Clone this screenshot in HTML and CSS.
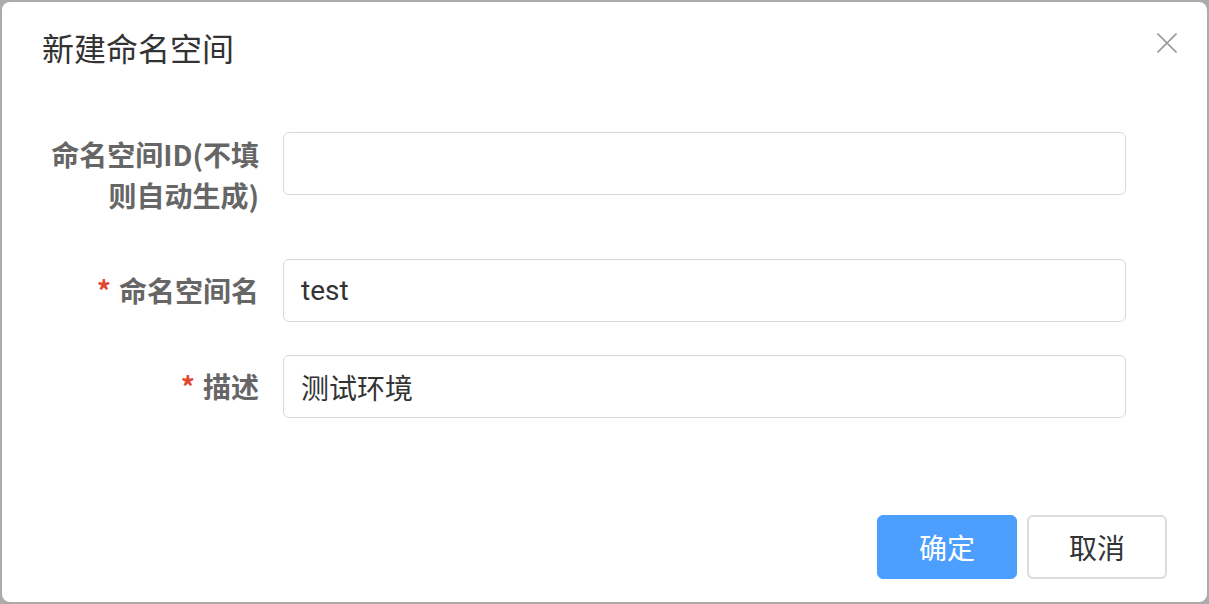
FILE: index.html
```html
<!DOCTYPE html>
<html lang="zh-CN">
<head>
<meta charset="utf-8">
<title>新建命名空间</title>
<link rel="stylesheet" href="styles.css">
</head>
<body>
<div class="dialog">
  <div class="dialog-header">
    <span class="dialog-title">新建命名空间</span>
    <button class="dialog-close" aria-label="关闭">
      <svg width="20" height="20" viewBox="0 0 20 20"><path d="M0.5 0.5 L19.5 19.5 M19.5 0.5 L0.5 19.5" stroke="#9a9a9a" stroke-width="1.6" fill="none"/></svg>
    </button>
  </div>
  <form class="dialog-body">
    <div class="form-row">
      <label class="form-label form-label-multi">命名空间ID(不填则自动生成)</label>
      <input class="form-input" type="text" value="">
    </div>
    <div class="form-row">
      <label class="form-label"><span class="required">*</span>命名空间名</label>
      <input class="form-input" type="text" value="test">
    </div>
    <div class="form-row">
      <label class="form-label"><span class="required">*</span>描述</label>
      <input class="form-input" type="text" value="测试环境">
    </div>
  </form>
  <div class="dialog-footer">
    <button class="btn btn-primary" type="button">确定</button>
    <button class="btn btn-default" type="button">取消</button>
  </div>
</div>
</body>
</html>
```

FILE: styles.css
```css
* { box-sizing: border-box; }
html, body { margin: 0; padding: 0; }
body {
  width: 1209px;
  height: 604px;
  background: #ababab;
  font-family: "Noto Sans CJK SC", "Noto Sans", sans-serif;
  overflow: hidden;
}
.dialog {
  margin: 2px;
  width: 1205px;
  height: 600px;
  background: #ffffff;
  border-radius: 8px;
  display: flex;
  flex-direction: column;
}
.dialog-header {
  display: flex;
  justify-content: space-between;
  align-items: flex-start;
  padding: 25px 30px 0 40px;
}
.dialog-title {
  font-size: 32px;
  line-height: 40px;
  color: #333333;
}
.dialog-close {
  margin-top: 6px;
  width: 20px;
  height: 20px;
  padding: 0;
  border: 0;
  background: none;
  display: flex;
}
.dialog-body {
  margin: 0;
  padding: 65px 81px 0 42px;
}
.form-row {
  display: flex;
  align-items: flex-start;
  margin-bottom: 33px;
}
.form-label {
  width: 239px;
  flex: none;
  padding-right: 24px;
  text-align: right;
  font-size: 28px;
  font-weight: 700;
  color: #666666;
  line-height: 63px;
}
.form-label-multi {
  line-height: 41px;
  padding-top: 2px;
  padding-bottom: 10px;
}
.required {
  color: #e0472f;
  margin-right: 8px;
}
.form-input {
  flex: 1;
  height: 63px;
  border: 1px solid #d9d9d9;
  border-radius: 6px;
  padding: 0 17px;
  font-family: "Roboto", "Noto Sans CJK SC", sans-serif;
  font-size: 28px;
  color: #333333;
  outline: none;
  background: #fff;
}
.dialog-footer {
  margin-top: auto;
  display: flex;
  justify-content: flex-end;
  gap: 10px;
  padding: 0 40px 23px 0;
}
.btn {
  width: 140px;
  height: 64px;
  border-radius: 6px;
  font-family: "Noto Sans CJK SC", sans-serif;
  font-size: 28px;
  padding: 0;
  cursor: pointer;
}
.btn-primary {
  background: #4c9ffe;
  border: 1px solid #4c9ffe;
  color: #ffffff;
}
.btn-default {
  background: #ffffff;
  border: 2px solid #dcdcdc;
  color: #333333;
}
```
